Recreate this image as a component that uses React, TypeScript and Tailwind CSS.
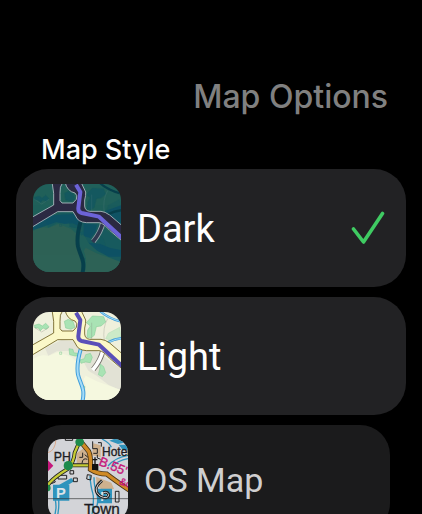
import { useState } from 'react';
import clsx from 'clsx';

type Palette = {
  land: string;
  field: string;
  wood: string;
  woodEdge: string;
  urban: string;
  casing: string;
  road: string;
  lane: string;
  laneEdge: string;
  water: string;
  waterEdge: string;
  route: string;
};

const darkPalette: Palette = {
  land: '#20605a',
  field: '#2d6256',
  wood: '#14595f',
  woodEdge: '#1a5a5c',
  urban: '#0c4f66',
  casing: '#b4c2c6',
  road: '#2b2942',
  lane: '#2f3850',
  laneEdge: '#8fa0a6',
  water: '#05404c',
  waterEdge: '#0a3f4b',
  route: '#6c63d8',
};

const lightPalette: Palette = {
  land: '#eff0dc',
  field: '#f5f8df',
  wood: '#a9e3b4',
  woodEdge: '#7fcb92',
  urban: '#dfdfd4',
  casing: '#6a5a1c',
  road: '#fbf8c8',
  lane: '#ffffff',
  laneEdge: '#77716c',
  water: '#a5dcf8',
  waterEdge: '#3f9edb',
  route: '#5a4fb8',
};

// Outer edge of the road network, then the green island between the two northern arms
const roadArea =
  'M0 120 L76 77 V42 L70 0 H154 L172 38 Q173 48 169 62 V80 Q170 94 184 96 H218 Q230 97 244 107 L292 148 V194 L244 153 Q226 131 212 130 H174 Q148 128 142 110 L134 97 H88 L0 150 Z ' +
  'M106 4 Q92 24 95 42 V64 L101 71 H134 L144 60 Q149 48 140 41 Q116 36 110 8 Z';

const river = 'M157 126 C150 150 144 175 149 202 C156 232 174 244 160 290';
const streams = 'M214 10 Q238 34 290 46 M290 92 Q264 92 236 106';

// Street preview used by both the dark and the light style
function StreetMap({ palette: p, dark = false }: { palette: Palette; dark?: boolean }) {
  return (
    <svg viewBox="14 14 264 264" className="size-full" aria-hidden="true">
      <rect x="14" y="14" width="264" height="264" fill={p.land} />
      {/* built up ground */}
      <path d="M50 122 L100 98 L150 104 L205 130 L250 165 L278 185 V250 L240 232 L205 205 L180 190 L158 150 L130 130 L85 132 L60 145 Z" fill={p.urban} opacity={dark ? 0.35 : 0.85} />
      {/* open field */}
      <path d="M14 155 Q40 138 60 146 L90 134 L128 148 L152 170 Q146 205 160 245 L158 278 H14 Z" fill={p.field} />
      <path d="M172 205 L205 222 L278 248 V278 H170 Q178 240 166 215 Z" fill={p.field} />
      {/* woodland */}
      <g fill={p.wood} stroke={p.woodEdge} strokeWidth="1.5" strokeLinejoin="round">
        <path d="M18 54 L32 50 L42 56 L52 48 L62 58 L54 66 L44 62 L36 70 L30 62 L20 62 Z" />
        <path d="M108 42 L120 36 L134 42 L140 60 L128 66 L112 62 Z" />
        <path d="M192 26 L226 28 L232 44 L218 56 L204 58 L198 84 L188 92 L176 90 L178 68 L186 56 L174 46 Z" />
        <path d="M122 124 L134 126 L136 136 L148 138 L152 146 L140 146 L124 142 Z" />
        <path d="M172 142 L186 138 L192 150 L186 166 L172 164 L158 168 L154 158 L168 154 Z" />
        <path d="M216 170 L226 178 L232 196 L222 208 L210 202 L214 186 Z" />
        <path d="M240 78 L274 60 L278 88 L246 98 L232 94 Z" opacity="0.5" />
        <path d="M160 232 L170 238 L166 248 L158 244 Z" />
        <path d="M94 134 h6 v7 h-6 Z" fill="none" />
      </g>
      {dark && (
        <g fill={p.urban} opacity="0.8">
          <path d="M14 132 L66 108 L138 104 L160 128 L152 140 L132 132 L108 134 L84 128 L40 144 L14 152 Z" />
          <path d="M166 132 L206 136 L200 160 L186 176 L166 170 Z" />
          <path d="M228 96 L278 78 V140 Z" />
          <path d="M180 190 L216 194 L246 206 L278 212 V232 L240 232 L206 214 Z" />
        </g>
      )}
      {/* footpaths */}
      <g fill="none" stroke={p.laneEdge} strokeWidth="1.5" opacity={dark ? 0.25 : 0.5}>
        <path d="M238 34 Q222 60 228 102" />
        <path d="M18 60 L40 74 L62 60" />
        <path d="M190 46 V96" />
      </g>
      {/* water */}
      <g fill="none" strokeLinecap="round">
        <path d={river} stroke={p.waterEdge} strokeWidth="12" />
        <path d={river} stroke={p.water} strokeWidth="6" />
        <path d={streams} stroke={p.waterEdge} strokeWidth="7" />
        <path d={streams} stroke={p.water} strokeWidth="3" />
      </g>
      {/* side lane */}
      <path d="M224 128 Q218 158 195 186" fill="none" stroke={p.laneEdge} strokeWidth="16" />
      <path d="M224 128 Q218 158 193 188" fill="none" stroke={p.lane} strokeWidth="11" />
      {/* roads and the highlighted route */}
      <path d={roadArea} fill={p.road} fillRule="evenodd" stroke={p.casing} strokeWidth="2.5" strokeLinejoin="round" />
      <path
        d="M143 16 L156 38 L150 86 Q149 98 160 101 L212 112 L290 184"
        fill="none"
        stroke={p.route}
        strokeWidth="12"
        strokeLinejoin="round"
      />
    </svg>
  );
}

function SurveyMap() {
  return (
    <svg viewBox="60 57 240 240" className="size-full font-['Liberation_Sans',sans-serif]" aria-hidden="true">
      <rect x="60" y="57" width="240" height="240" fill="#d3d4d8" />
      {/* contours */}
      <path d="M60 98 Q82 92 84 57 M60 76 Q68 72 70 57" fill="none" stroke="#d9a98d" strokeWidth="3" />
      {/* built up ground */}
      <path d="M146 100 L165 86 L184 110 V132 L146 134 Z M196 70 L218 76 V112 L192 106 Z M204 170 L250 188 L258 206 L230 216 L206 196 Z" fill="#cfb18e" />
      {/* water */}
      <g fill="none" stroke="#2f94bd" strokeWidth="4">
        <path d="M186 168 Q188 200 194 218 Q200 238 190 297" />
        <path d="M198 172 Q198 200 206 218 Q212 240 206 262" />
        <path d="M76 297 Q88 270 82 240 M86 297 Q94 270 92 240" />
        <path d="M222 57 Q246 70 250 82 M240 138 Q262 112 300 106 M250 142 Q268 122 300 116" />
      </g>
      <path d="M94 194 L130 174 L138 184 L112 200 L100 204 Z M244 62 L258 57 L300 57 V66 L270 72 Z M272 74 H300 V90 H284 Z" fill="#2f94bd" />
      {/* buildings */}
      <g fill="none" stroke="#222222" strokeWidth="3">
        <path d="M66 182 l12 -4 4 8 -12 5 Z M90 166 h26 v11 h-26 Z M136 174 h12 v11 h-12 Z M126 152 h11 v10 h-11 Z M178 164 l12 2 -2 14 -12 -3 Z" />
        <path d="M154 112 h10 v-14 M170 104 l10 8 M162 130 q2 -18 16 -12 M194 64 v22 h14 v14 h-12 M210 68 h10 v12 M112 57 v4 h22 v-4" />
        <path d="M208 104 v10 l10 4" />
        <path d="M262 214 h11 v32 h-11 Z" />
      </g>
      {/* minor road */}
      <path d="M56 200 Q70 176 120 146 Q138 126 140 98 L154 66 M134 136 H188" fill="none" stroke="#222222" strokeWidth="12" />
      <path d="M56 200 Q70 176 120 146 Q138 126 140 98 L154 66 M134 136 H188" fill="none" stroke="#c6cc35" strokeWidth="7" />
      {/* main road */}
      <path d="M156 62 L182 94 Q190 112 187 148 Q208 162 236 162 Q262 182 306 212" fill="none" stroke="#4a3517" strokeWidth="15" />
      <path d="M156 62 L182 94 Q190 112 187 148 Q208 162 236 162 Q262 182 306 212" fill="none" stroke="#cf8a25" strokeWidth="10" />
      <g fill="#1d8a4c">
        <circle cx="155" cy="66" r="13" />
        <circle cx="121" cy="137" r="14" />
        <circle cx="58" cy="204" r="10" />
      </g>
      {/* church */}
      <path d="M192 132 h19 v18 h-19 Z" fill="#111111" />
      <path d="M201 132 V112 M194 119 H208" stroke="#111111" strokeWidth="4" />
      <path d="M60 121 L76 137 L60 154 Z" fill="#c5177b" />
      {/* parking */}
      <path d="M75 194 H124 V242 H75 Z M208 206 H252 V250 H208 Z" fill="#2f94bd" />
      <g fill="#dbe3e8" fontWeight="700">
        <text x="84" y="234" fontSize="44">P</text>
        <text x="217" y="242" fontSize="38">P</text>
      </g>
      {/* car park loop */}
      <path d="M222 182 Q190 208 216 228 Q240 240 242 224 Q238 214 226 218" fill="none" stroke="#222222" strokeWidth="9" />
      <path d="M222 182 Q190 208 216 228 Q240 240 242 224 Q238 214 226 218" fill="none" stroke="#d3d4d8" strokeWidth="3" />
      <path d="M60 236 H300" stroke="#333333" strokeWidth="2" />
      <g fill="#1c1c22" stroke="#1c1c22">
        <text x="77" y="124" fontSize="37">PH</text>
        <text x="222" y="107" fontSize="36">Hotel</text>
        <text x="168" y="283" fontSize="46">Town</text>
      </g>
      <g fill="#c5177b" stroke="#c5177b">
        <text transform="translate(210 134) rotate(22)" fontSize="39">B.55'</text>
        <text transform="translate(272 192) rotate(20)" fontSize="30">&amp;c</text>
      </g>
    </svg>
  );
}

const styles = [
  { id: 'dark', label: 'Dark', preview: <StreetMap palette={darkPalette} dark /> },
  { id: 'light', label: 'Light', preview: <StreetMap palette={lightPalette} /> },
  { id: 'os', label: 'OS Map', preview: <SurveyMap />, receding: true },
];

export default function App() {
  const [selected, setSelected] = useState('dark');

  return (
    <main className="h-screen overflow-y-auto bg-black px-4 pt-[77px] pb-4 font-['Inter',sans-serif] text-white [scrollbar-width:none]">
      <h1 className="pr-[18px] text-right text-[32px] leading-10 font-medium text-[#808080]">Map Options</h1>

      <fieldset>
        <legend className="pt-[17px] pb-[3px] pl-[25px] text-[27px] leading-8 font-medium">Map Style</legend>

        <div className="flex flex-col gap-[10px]">
          {styles.map((style) => (
            <label
              key={style.id}
              className={clsx(
                "relative flex cursor-pointer items-center gap-4 font-['Roboto',sans-serif] has-focus-visible:ring-2 has-focus-visible:ring-white",
                style.receding
                  ? 'mx-4 rounded-[30px] bg-[#1b1b1c] px-4 py-[14px] text-[34px] text-[#cfcfd0]'
                  : 'rounded-[32px] bg-[#222224] px-[17px] py-[15px] text-[38px]'
              )}
            >
              <input
                type="radio"
                name="map-style"
                value={style.id}
                checked={selected === style.id}
                onChange={() => setSelected(style.id)}
                className="sr-only"
              />
              <span
                className={clsx(
                  'shrink-0 overflow-hidden',
                  style.receding ? 'size-20 rounded-[14px]' : 'size-[88px] rounded-[16px]'
                )}
              >
                {style.preview}
              </span>
              <span className="flex-1 pt-[2px] leading-none">{style.label}</span>
              {selected === style.id && (
                <svg viewBox="0 0 36 36" className="mr-[2px] size-9 shrink-0" fill="none" aria-hidden="true">
                  <path
                    d="M2.5 19 L12.5 32 L31.5 3.5"
                    stroke="#3fcb62"
                    strokeWidth="3.6"
                    strokeLinecap="round"
                    strokeLinejoin="round"
                  />
                </svg>
              )}
            </label>
          ))}
        </div>
      </fieldset>
    </main>
  );
}
